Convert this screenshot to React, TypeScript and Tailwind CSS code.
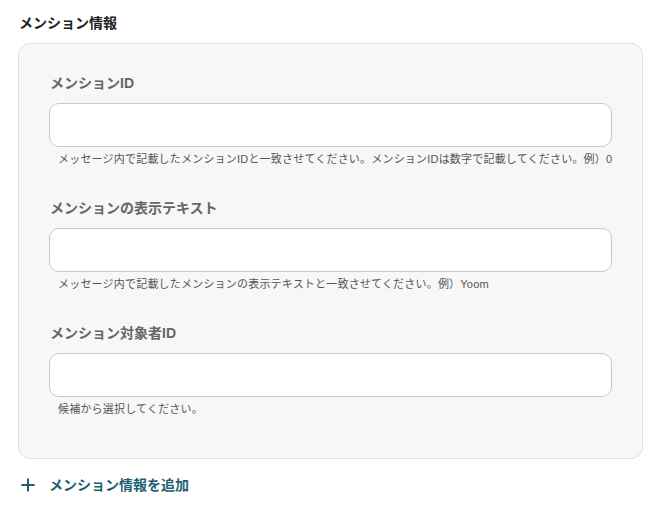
import { Plus } from "lucide-react";

const font = {
  fontFamily: '"Liberation Sans", "Noto Sans CJK JP", sans-serif',
};

const fields = [
  {
    label: "メンションID",
    help: "メッセージ内で記載したメンションIDと一致させてください。メンションIDは数字で記載してください。例）0",
  },
  {
    label: "メンションの表示テキスト",
    help: "メッセージ内で記載したメンションの表示テキストと一致させてください。例）Yoom",
  },
  {
    label: "メンション対象者ID",
    help: "候補から選択してください。",
  },
];

export default function App() {
  return (
    <div className="min-h-screen bg-white pl-[18px] pr-[19px] pt-[13px]" style={font}>
      <h2 className="pl-px text-[14px] font-bold leading-5 text-[#222]">メンション情報</h2>

      <div className="mt-[10px] rounded-[12px] border border-[#e1e1e1] bg-[#f7f7f7] px-[30px] pb-[42px] pt-[29px]">
        <div className="flex flex-col gap-[32px]">
          {fields.map((f) => (
            <div key={f.label}>
              <label className="block pl-px text-[14px] font-bold leading-5 text-[#666]">{f.label}</label>
              <input
                type="text"
                className="mt-[10px] block h-[44px] w-full rounded-[10px] border border-[#c8c8c8] bg-white px-3 text-sm outline-none"
              />
              <p className="mt-[5px] whitespace-nowrap pl-[9px] text-[11px] leading-[14px] tracking-[0.2px] text-[#555]">
                {f.help}
              </p>
            </div>
          ))}
        </div>
      </div>

      <button className="mt-[16px] flex items-center gap-[11px] text-[14px] font-bold leading-5 text-[#1e5f72]">
        <Plus className="h-5 w-5" strokeWidth={2.4} />
        <span>メンション情報を追加</span>
      </button>
    </div>
  );
}
